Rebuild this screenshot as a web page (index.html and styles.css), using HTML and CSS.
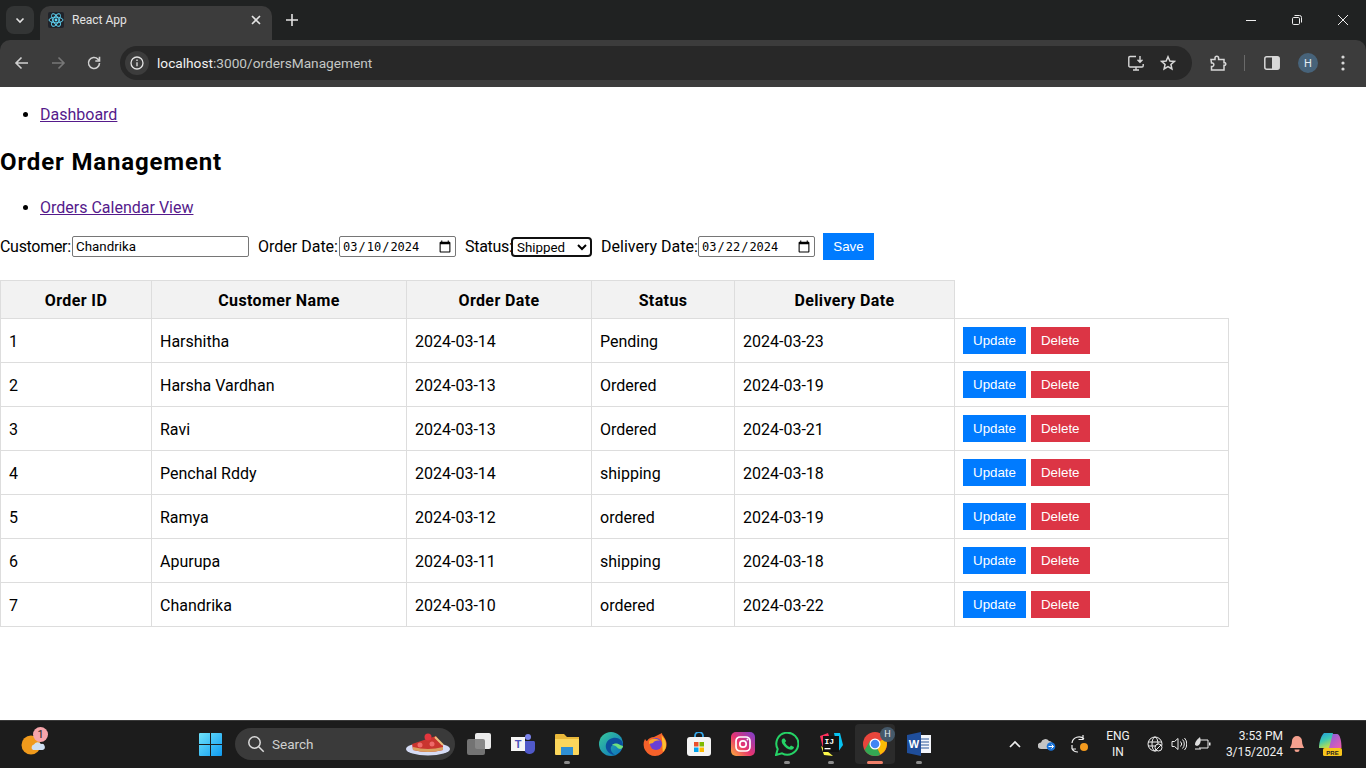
FILE: index.html
```html
<!DOCTYPE html>
<html>
<head>
    <title>React App</title>
    <link rel="stylesheet" href="styles.css">
</head>
<body>
    <div class="browser-top">
        <div class="tab-strip">
            <div class="tab-search">
                <svg width="12" height="12" viewBox="0 0 12 12"><path d="M2.5 4.5 6 8l3.5-3.5" fill="none" stroke="#e3e3e3" stroke-width="1.6"/></svg>
            </div>
            <div class="tab">
                <div class="favicon">
                    <svg width="16" height="16" viewBox="0 0 16 16" fill="none" stroke="#61dafb" stroke-width=".9">
                        <ellipse cx="8" cy="8" rx="7" ry="2.8"/>
                        <ellipse cx="8" cy="8" rx="7" ry="2.8" transform="rotate(60 8 8)"/>
                        <ellipse cx="8" cy="8" rx="7" ry="2.8" transform="rotate(120 8 8)"/>
                        <circle cx="8" cy="8" r="1.4" fill="#61dafb" stroke="none"/>
                    </svg>
                </div>
                <span class="tab-title">React App</span>
                <svg class="tab-close" width="10" height="10" viewBox="0 0 10 10"><path d="M1 1l8 8M9 1l-8 8" stroke="#e3e3e3" stroke-width="1.6"/></svg>
            </div>
            <svg class="new-tab" width="12" height="12" viewBox="0 0 12 12"><path d="M6 0v12M0 6h12" stroke="#e3e3e3" stroke-width="1.6"/></svg>
            <div class="window-controls">
                <div class="win-btn"><svg width="12" height="12" viewBox="0 0 12 12"><path d="M1 6.5h10" stroke="#eee" stroke-width="1"/></svg></div>
                <div class="win-btn"><svg width="12" height="12" viewBox="0 0 12 12" fill="none" stroke="#eee"><rect x="1.5" y="3.5" width="7" height="7" rx="1.2"/><path d="M3.5 1.5h5a2 2 0 0 1 2 2v5"/></svg></div>
                <div class="win-btn"><svg width="12" height="12" viewBox="0 0 12 12"><path d="M1 1l10 10M11 1 1 11" stroke="#eee" stroke-width="1"/></svg></div>
            </div>
        </div>
        <div class="toolbar">
            <div class="nav-btn"><svg width="16" height="16" viewBox="0 0 16 16" fill="none" stroke="#d0d0d0" stroke-width="1.6"><path d="M14 8H2M7.5 2.5 2 8l5.5 5.5"/></svg></div>
            <div class="nav-btn"><svg width="16" height="16" viewBox="0 0 16 16" fill="none" stroke="#777" stroke-width="1.6"><path d="M2 8h12M8.5 2.5 14 8l-5.500 5.500"/></svg></div>
            <div class="nav-btn"><svg width="16" height="16" viewBox="0 0 16 16" fill="none" stroke="#d0d0d0" stroke-width="1.6"><path d="M13.500 8a5.500 5.500 0 1 1-1.600-3.900L13.500 5.700"/><path d="M13.500 1.800v4.200H9.300" /></svg></div>
            <div class="address-bar">
                <div class="site-info"><svg width="14" height="14" viewBox="0 0 14 14" fill="none" stroke="#e3e3e3" stroke-width="1.300"><circle cx="7" cy="7" r="6"/><path d="M7 6.200v4M7 3.600v1.400"/></svg></div>
                <div class="url"><span class="url-host">localhost</span>:3000/ordersManagement</div>
                <svg class="addr-icon" width="18" height="18" viewBox="0 0 18 18" fill="none" stroke="#d8d8d8" stroke-width="1.400"><path d="M9 2.500H3a1.200 1.200 0 0 0-1.200 1.200v8A1.200 1.200 0 0 0 3 13h12a1.200 1.200 0 0 0 1.200-1.200V10M6 16h6M9 13v3M13 2v6M10.500 5.800 13 8.300l2.500-2.500"/></svg>
                <svg class="addr-icon star-icon" width="16" height="16" viewBox="0 0 18 18" fill="none" stroke="#d8d8d8" stroke-width="1.700"><path d="m9 2 2.100 4.700 5 .5-3.800 3.400 1.100 5L9 13l-4.400 2.600 1.100-5L1.900 7.200l5-.5z"/></svg>
            </div>
            <div class="tool-icons">
                <svg width="18" height="18" viewBox="0 0 18 18" fill="none" stroke="#d8d8d8" stroke-width="1.500"><path d="M2 5.500h4V4a1.800 1.800 0 0 1 3.600 0v1.500H15v3.300h1.200a1.500 1.500 0 0 1 0 2.400H15V16H2.500v-3.500H3.500a1.800 1.800 0 0 0 0-3.500H2.500z"/></svg>
                <div class="tool-sep"></div>
                <svg width="16" height="14" viewBox="0 0 16 14"><rect x=".8" y=".8" width="14.400" height="12.400" rx="2" fill="none" stroke="#d8d8d8" stroke-width="1.500"/><rect x="8" y="1" width="7" height="12" fill="#d8d8d8"/></svg>
                <div class="avatar">H</div>
                <svg width="4" height="16" viewBox="0 0 4 16" fill="#d8d8d8"><circle cx="2" cy="2" r="1.600"/><circle cx="2" cy="8" r="1.600"/><circle cx="2" cy="14" r="1.600"/></svg>
            </div>
        </div>
    </div>

    <div class="page">
        <ul class="link-list">
            <li><a href="#">Dashboard</a></li>
        </ul>
        <h2>Order Management</h2>
        <ul class="link-list">
            <li><a href="#">Orders Calendar View</a></li>
        </ul>

        <form class="order-form">
            <label for="customer" class="label-customer">Customer:</label>
            <input type="text" id="customer" class="customer-input" value="Chandrika">
            <label for="orderDate" class="label-order">Order Date:</label>
            <input type="date" id="orderDate" class="date-input" value="2024-03-10">
            <label for="status" class="label-status">Status:</label>
            <select id="status" class="status-select">
                <option>Shipped</option>
            </select>
            <label for="deliveryDate" class="label-delivery">Delivery Date:</label>
            <input type="date" id="deliveryDate" class="date-input" value="2024-03-22">
            <button type="button" class="btn btn-blue save-btn">Save</button>
        </form>

        <table class="orders-table">
            <colgroup>
                <col class="col-id">
                <col class="col-name">
                <col class="col-date">
                <col class="col-status">
                <col class="col-delivery">
                <col class="col-actions">
            </colgroup>
            <thead>
                <tr>
                    <th>Order ID</th>
                    <th>Customer Name</th>
                    <th>Order Date</th>
                    <th>Status</th>
                    <th>Delivery Date</th>
                </tr>
            </thead>
            <tbody>
                <tr>
                    <td>1</td><td>Harshitha</td><td>2024-03-14</td><td>Pending</td><td>2024-03-23</td>
                    <td><div class="actions"><button class="btn btn-blue">Update</button><button class="btn btn-red">Delete</button></div></td>
                </tr>
                <tr>
                    <td>2</td><td>Harsha Vardhan</td><td>2024-03-13</td><td>Ordered</td><td>2024-03-19</td>
                    <td><div class="actions"><button class="btn btn-blue">Update</button><button class="btn btn-red">Delete</button></div></td>
                </tr>
                <tr>
                    <td>3</td><td>Ravi</td><td>2024-03-13</td><td>Ordered</td><td>2024-03-21</td>
                    <td><div class="actions"><button class="btn btn-blue">Update</button><button class="btn btn-red">Delete</button></div></td>
                </tr>
                <tr>
                    <td>4</td><td>Penchal Rddy</td><td>2024-03-14</td><td>shipping</td><td>2024-03-18</td>
                    <td><div class="actions"><button class="btn btn-blue">Update</button><button class="btn btn-red">Delete</button></div></td>
                </tr>
                <tr>
                    <td>5</td><td>Ramya</td><td>2024-03-12</td><td>ordered</td><td>2024-03-19</td>
                    <td><div class="actions"><button class="btn btn-blue">Update</button><button class="btn btn-red">Delete</button></div></td>
                </tr>
                <tr>
                    <td>6</td><td>Apurupa</td><td>2024-03-11</td><td>shipping</td><td>2024-03-18</td>
                    <td><div class="actions"><button class="btn btn-blue">Update</button><button class="btn btn-red">Delete</button></div></td>
                </tr>
                <tr>
                    <td>7</td><td>Chandrika</td><td>2024-03-10</td><td>ordered</td><td>2024-03-22</td>
                    <td><div class="actions"><button class="btn btn-blue">Update</button><button class="btn btn-red">Delete</button></div></td>
                </tr>
            </tbody>
        </table>
    </div>

    <div class="taskbar">
        <div class="weather">
            <svg width="26" height="26" viewBox="0 0 26 26">
                <circle cx="11" cy="14" r="9.500" fill="#f09a1c"/>
                <path d="M13 19a3 3 0 0 1 1-5.500 4 4 0 0 1 7-.5 3 3 0 0 1 1.500 6z" fill="#cfe0f2"/>
            </svg>
            <span class="weather-badge">1</span>
        </div>

        <div class="start-btn">
            <svg width="23" height="23" viewBox="0 0 23 23">
                <defs>
                    <linearGradient id="winGrad" x1="0" y1="0" x2="1" y2="1"><stop offset="0" stop-color="#6fe3fb"/><stop offset="1" stop-color="#0f9af0"/></linearGradient>
                </defs>
                <path fill="url(#winGrad)" d="M0 1a1 1 0 0 1 1-1h10v11H0zM12 0h10a1 1 0 0 1 1 1v10H12zM0 12h11v11H1a1 1 0 0 1-1-1zM12 12h11v10a1 1 0 0 1-1 1H12z"/>
            </svg>
        </div>

        <div class="search-box">
            <svg width="18" height="18" viewBox="0 0 18 18" fill="none" stroke="#dcdcdc" stroke-width="1.500"><circle cx="7.500" cy="7.500" r="5.700"/><path d="m11.700 11.700 5 5"/></svg>
            <span class="search-text">Search</span>
            <svg class="search-pie" width="46" height="26" viewBox="0 0 46 26">
                <ellipse cx="23" cy="18" rx="22" ry="6.500" fill="#d5dcf5"/>
                <path d="M7 13 31 5l7 9v5q-15 4-30 0z" fill="#c9352f"/>
                <path d="M8 19q15 4 30 0v-3q-15 4-30 0z" fill="#d9a05f"/>
                <path d="M30 6l8 8" stroke="#e8c27f" stroke-width="2"/>
                <circle cx="23" cy="6" r="3.500" fill="#e3363d"/>
                <circle cx="15" cy="14" r="2.500" fill="#ef6a6a"/>
                <circle cx="27" cy="13" r="2.500" fill="#ef6a6a"/>
            </svg>
        </div>

        <div class="app-list">
            <div class="app-slot">
                <svg width="26" height="24" viewBox="0 0 26 24"><rect x="9" y="1" width="16" height="16" rx="2" fill="#eaeaea"/><rect x="1" y="7" width="18" height="16" rx="2" fill="#7d7d7d" opacity=".9"/></svg>
            </div>
            <div class="app-slot">
                <svg width="26" height="24" viewBox="0 0 26 24">
                    <circle cx="18" cy="5" r="3" fill="#7b83eb"/>
                    <path d="M14 9h10a2 2 0 0 1 1 2v6a5 5 0 0 1-5 5h-1a6 6 0 0 1-5-5z" fill="#5059c9"/>
                    <rect x="1" y="5" width="14" height="14" fill="#f5f5f5"/>
                    <text x="8" y="16" class="teams-letter">T</text>
                </svg>
            </div>
            <div class="app-slot running">
                <svg width="26" height="24" viewBox="0 0 26 24">
                    <path d="M1 3a1 1 0 0 1 1-1h8l3 3h12v3H1z" fill="#e9b83a"/>
                    <path d="M1 7h24v15a1 1 0 0 1-1 1H2a1 1 0 0 1-1-1z" fill="#fbd65c"/>
                    <rect x="7" y="15" width="12" height="8" fill="#2f8fd3"/>
                </svg>
            </div>
            <div class="app-slot">
                <svg width="24" height="24" viewBox="0 0 24 24">
                    <defs>
                        <linearGradient id="edgeGrad" x1="0" y1="0" x2="1" y2="1"><stop offset="0" stop-color="#38c99a"/><stop offset="1" stop-color="#0a6fc2"/></linearGradient>
                    </defs>
                    <circle cx="12" cy="12" r="12" fill="url(#edgeGrad)"/>
                    <path d="M24 13c0-5-5-8-10-7-5 1-8 5-7 10 1 4 5 7 9 7 -3-2-5-5-4-8 1-2 3-3 5-2 3 1 1 4 4 4 2 0 3-2 3-4z" fill="#0c4f9e"/>
                    <path d="M13 13c2-2 6-2 8 0l3 1c0 1-1 3-3 3-3 0-3-4-8-4z" fill="#6fe07f"/>
                </svg>
            </div>
            <div class="app-slot">
                <svg width="24" height="24" viewBox="0 0 24 24">
                    <path d="M12 24A11.500 11.500 0 0 1 2 7c1 1 1 2 2 2 2-3 4-4 7-4l8-4c0 2 1 2 2 4 3 4 3 8 2 11a11.500 11.500 0 0 1-11 8z" fill="#f5612a"/>
                    <path d="M18 1c0 3 2 3 4 7 2 5 1 9-2 12-1-4 0-10-2-19z" fill="#fdc02f"/>
                    <circle cx="13" cy="12" r="6" fill="#6b3fd4"/>
                    <path d="M6 9c3-3 8-3 11 0-3-1-6 0-7 2l-4 1z" fill="#f8a62d"/>
                </svg>
            </div>
            <div class="app-slot">
                <svg width="24" height="24" viewBox="0 0 24 24">
                    <path d="M8 6V4a4 4 0 0 1 8 0v2" fill="none" stroke="#35a6e8" stroke-width="1.800"/>
                    <rect y="5" width="24" height="19" rx="3" fill="#f4f4f4"/>
                    <rect x="7" y="10" width="4.500" height="4.500" fill="#ea4f2b"/>
                    <rect x="12.500" y="10" width="4.500" height="4.500" fill="#7fb900"/>
                    <rect x="7" y="15.500" width="4.500" height="4.500" fill="#00a3ee"/>
                    <rect x="12.500" y="15.500" width="4.500" height="4.500" fill="#fdb900"/>
                </svg>
            </div>
            <div class="app-slot">
                <svg width="24" height="24" viewBox="0 0 24 24">
                    <defs>
                        <linearGradient id="instaGrad" x1="0" y1="1" x2="1" y2="0"><stop offset="0" stop-color="#fdb13a"/><stop offset=".45" stop-color="#e8346f"/><stop offset="1" stop-color="#7a3fd0"/></linearGradient>
                    </defs>
                    <rect width="24" height="24" rx="5" fill="url(#instaGrad)"/>
                    <rect x="5" y="5" width="14" height="14" rx="4" fill="none" stroke="#fff" stroke-width="1.700"/>
                    <circle cx="12" cy="12" r="3.200" fill="none" stroke="#fff" stroke-width="1.700"/>
                    <circle cx="16.500" cy="7.500" r="1" fill="#fff"/>
                </svg>
            </div>
            <div class="app-slot running">
                <svg width="24" height="24" viewBox="0 0 24 24">
                    <path d="M1 23l1.700-6A11 11 0 1 1 7 21.300z" fill="none" stroke="#25d366" stroke-width="2"/>
                    <path d="M8 6.500c-1.500 1-2 3 0 6s5 5 8 5.200c2 0 3-1.500 3-2.700l-3-1.500-1.500 1.500c-2-.8-3.500-2.300-4.500-4.500l1.200-1.500L9.500 6.500z" fill="#25d366"/>
                </svg>
            </div>
            <div class="app-slot running">
                <svg width="24" height="24" viewBox="0 0 24 24">
                    <path d="M1 4 9 1l2 6-7 9z" fill="#fe315d"/>
                    <path d="M15 1h6l3 12-5 7z" fill="#07c3f2"/>
                    <path d="M2 14l3 9 9 1z" fill="#fcf84a"/>
                    <rect x="4" y="4" width="16" height="16" fill="#111"/>
                    <text x="5.500" y="12" class="ij-letters">IJ</text>
                    <rect x="5.500" y="16" width="6" height="1.300" fill="#fff"/>
                </svg>
            </div>
            <div class="app-slot active">
                <svg width="24" height="24" viewBox="0 0 24 24">
                    <circle cx="12" cy="12" r="12" fill="#e8453c"/>
                    <path d="M12 12 22.400 6a12 12 0 0 1-5 16.400z" fill="#fbbc05"/>
                    <path d="M12 12 17.400 22.700A12 12 0 0 1 1.600 18L7 9z" fill="#34a853"/>
                    <circle cx="12" cy="12" r="5.500" fill="#fff"/>
                    <circle cx="12" cy="12" r="4.300" fill="#4285f4"/>
                </svg>
                <span class="profile-badge">H</span>
            </div>
            <div class="app-slot running">
                <svg width="24" height="24" viewBox="0 0 24 24">
                    <rect x="6" y="3" width="18" height="18" fill="#f4f6fb"/>
                    <path d="M14 7h8M14 10h8M14 13h8M14 16h8" stroke="#2b579a" stroke-width="1.200"/>
                    <path d="M0 3l14-3v24L0 21z" fill="#1f4e9b"/>
                    <text x="7" y="16" class="word-letter">W</text>
                </svg>
            </div>
        </div>

        <div class="tray">
            <svg class="tray-chevron" width="12" height="8" viewBox="0 0 12 8"><path d="M1 7l5-5 5 5" fill="none" stroke="#eee" stroke-width="1.700"/></svg>
            <svg class="tray-cloud" width="18" height="14" viewBox="0 0 18 14">
                <path d="M3 12a3 3 0 0 1 0-6.500 4.500 4.500 0 0 1 8-1.500 3 3 0 0 1 3 3v5z" fill="#c4c4c4"/>
                <circle cx="13" cy="9.500" r="4.300" fill="#1a73d8"/>
                <path d="M10.500 9.500h5M13.500 7.500l2 2-2 2" fill="none" stroke="#fff"/>
            </svg>
            <svg class="tray-sync" width="20" height="20" viewBox="0 0 20 20">
                <path d="M2 9a7 7 0 0 1 12-4M13 1v4.500H8.500M2 15v-4M2 15h4M2 15a7 7 0 0 0 6 3" fill="none" stroke="#eee" stroke-width="1.200"/>
                <circle cx="14" cy="13" r="4" fill="#f39a1e"/>
            </svg>
            <div class="lang">ENG<br>IN</div>
            <svg class="tray-net" width="16" height="16" viewBox="0 0 16 16" fill="none" stroke="#eee" stroke-width="1"><circle cx="8" cy="8" r="7"/><ellipse cx="8" cy="8" rx="3" ry="7"/><path d="M1 6h14M1 10h14"/><circle cx="11.500" cy="11.500" r="3.500" fill="#1c1c1c"/><path d="m9 14 5-5"/></svg>
            <svg class="tray-vol" width="16" height="16" viewBox="0 0 16 16" fill="none" stroke="#eee" stroke-width="1"><path d="M1 5.500h2.500L7 2.500v11l-3.500-3H1z"/><path d="M9.500 5.500a3.500 3.500 0 0 1 0 5M11.500 3.500a6.500 6.500 0 0 1 0 9M13.500 2a9 9 0 0 1 0 12"/></svg>
            <svg class="tray-batt" width="17" height="16" viewBox="0 0 17 16"><path d="M5 4h9v8H5" fill="none" stroke="#eee"/><path d="M15 6.500h1.500v3H15" fill="#eee"/><path d="M1 9c0-4 3-6 5-8 1 3 1 6-1 8l-2 1z" fill="#ddd"/><path d="M1 13h6" stroke="#eee"/></svg>
            <div class="clock"><div>3:53 PM</div><div>3/15/2024</div></div>
            <svg class="tray-bell" width="16" height="18" viewBox="0 0 16 18"><path d="M8 1a5 5 0 0 1 5 5c0 4 2 6 2 7H1c0-1 2-3 2-7a5 5 0 0 1 5-5z" fill="#f4a08e"/><path d="M5.500 14.500h5a2.500 2.500 0 0 1-5 0z" fill="#f4a08e"/></svg>
            <svg class="tray-copilot" width="24" height="24" viewBox="0 0 24 24">
                <defs>
                    <linearGradient id="copGrad" x1="0" y1="0" x2=".4" y2="1"><stop offset="0" stop-color="#1f9be0"/><stop offset=".55" stop-color="#3fc9b0"/><stop offset="1" stop-color="#b8dc50"/></linearGradient>
                    <linearGradient id="copGradR" x1="0" y1="0" x2="1" y2="1"><stop offset="0" stop-color="#7a5fe0"/><stop offset="1" stop-color="#f05cb0"/></linearGradient>
                </defs>
                <path d="M14 2h5c3 0 4.500 7 4.500 14H9z" fill="url(#copGradR)"/>
                <path d="M6 1h9l-4 15H1C1 10 3 4 6 1z" fill="url(#copGrad)"/>
                <rect x="5" y="16" width="19" height="8" rx="1.500" fill="#f8c51c"/>
                <text x="14.500" y="22.500" class="pre-letters">PRE</text>
            </svg>
        </div>
    </div>
</body>
</html>
```

FILE: styles.css
```css
* {
    box-sizing: border-box;
}

html, body {
    height: 100%;
}

body {
    margin: 0;
    display: flex;
    flex-direction: column;
    height: 768px;
    overflow: hidden;
    background-color: #ffffff;
    font-family: Roboto, "Noto Sans", sans-serif;
    font-size: 16px;
    color: #000000;
}

/* browser chrome */
.browser-top {
    flex: none;
    height: 87px;
    background-color: #202222;
}

.tab-strip {
    display: flex;
    align-items: flex-end;
    height: 40px;
}

.tab-search {
    display: flex;
    align-items: center;
    justify-content: center;
    width: 28px;
    height: 28px;
    margin: 0 6px 6px 6px;
    background-color: #333535;
    border-radius: 8px;
}

.tab {
    display: flex;
    align-items: center;
    width: 232px;
    height: 34px;
    padding: 0 11px 6px 8px;
    background-color: #3c3c3c;
    border-radius: 10px 10px 0 0;
}

.favicon {
    display: flex;
    flex: none;
    background-color: #20232a;
    border-radius: 2px;
}

.tab-title {
    flex: 1;
    margin-left: 8px;
    font-size: 12px;
    color: #e3e3e3;
}

.new-tab {
    margin: 0 0 14px 14px;
}

.window-controls {
    display: flex;
    margin-left: auto;
    height: 40px;
}

.win-btn {
    display: flex;
    align-items: center;
    justify-content: center;
    width: 46px;
    height: 40px;
}

.toolbar {
    display: flex;
    align-items: center;
    height: 47px;
    padding: 0 0 1px 4px;
    background-color: #3c3c3c;
    border-radius: 10px 10px 0 0;
}

.nav-btn {
    display: flex;
    align-items: center;
    justify-content: center;
    width: 36px;
    height: 34px;
}

.address-bar {
    display: flex;
    align-items: center;
    width: 1072px;
    height: 34px;
    margin-left: 8px;
    padding: 0 16px 0 5px;
    background-color: #282828;
    border-radius: 17px;
}

.site-info {
    display: flex;
    align-items: center;
    justify-content: center;
    width: 24px;
    height: 24px;
    background-color: #3c3c3c;
    border-radius: 50%;
}

.url {
    flex: 1;
    margin-left: 8px;
    font-size: 13.7px;
    color: #c4c7c5;
}

.url-host {
    color: #f1f1f1;
}

.addr-icon {
    margin-left: 14px;
}

.star-icon {
    margin-left: 15px;
}

.tool-icons {
    display: flex;
    align-items: center;
    margin-left: 17px;
}

.tool-sep {
    width: 1px;
    height: 16px;
    margin: 0 19px 0 17px;
    background-color: #6a6a6a;
}

.avatar {
    display: flex;
    align-items: center;
    justify-content: center;
    width: 20px;
    height: 20px;
    margin: 0 23px 0 18px;
    background-color: #47637a;
    border-radius: 50%;
    font-size: 11px;
    color: #e6edf2;
}

/* page */
.page {
    flex: 1;
    overflow: hidden;
}

.page a {
    color: #551a8b;
}

.link-list {
    margin: 17px 0 15px;
    padding-left: 40px;
    line-height: 21px;
}

h2 {
    margin: 21px 0 19px;
    font-size: 24px;
    line-height: 32px;
    letter-spacing: .85px;
}

.order-form {
    display: flex;
    align-items: center;
    margin-bottom: 20px;
    line-height: 22px;
}

.order-form label {
    white-space: nowrap;
}

.label-customer { width: 72px; letter-spacing: -.3px; }
.label-order { width: 81px; margin-left: 9px; }
.label-status { width: 46px; margin-left: 9px; letter-spacing: -.3px; }
.label-delivery { width: 97px; margin-left: 9px; }

.customer-input {
    width: 177px;
    height: 21px;
    padding: 1px 3px;
    font-family: Roboto, sans-serif;
    font-size: 13.33px;
    border: 1px solid #767676;
    border-radius: 2px;
}

.date-input {
    width: 117px;
    height: 21px;
    padding: 1px 3px 1px 2px;
    font-family: "DejaVu Sans Mono", monospace;
    font-size: 12px;
    border: 1px solid #767676;
    border-radius: 2px;
}

.date-input::-webkit-calendar-picker-indicator {
    width: 14px;
    height: 14px;
    margin: 0;
    padding: 0;
}

.status-select {
    width: 81px;
    height: 20px;
    padding: 0 0 1px;
    font-family: Roboto, sans-serif;
    font-size: 13.33px;
    background-color: #ffffff;
    border: 2px solid #101010;
    border-radius: 4px;
}

.btn {
    height: 27px;
    padding: 6px 10px;
    font-family: "Liberation Sans", Arial, sans-serif;
    font-size: 13.33px;
    line-height: 15px;
    color: #ffffff;
    border: none;
}

.btn-blue {
    background-color: #007bff;
}

.btn-red {
    background-color: #dc3545;
}

.save-btn {
    width: 51px;
    margin-left: 8px;
}

/* table */
.orders-table {
    width: 1228px;
    table-layout: fixed;
    border-collapse: collapse;
}

.col-id { width: 151px; }
.col-name { width: 255px; }
.col-date { width: 185px; }
.col-status { width: 143px; }
.col-delivery { width: 220px; }
.col-actions { width: 274px; }

.orders-table th,
.orders-table td {
    padding: 9px 8px 7px;
    border: 1px solid #dddddd;
    text-align: left;
    line-height: 21px;
}

.orders-table th {
    height: 38px;
    text-align: center;
    letter-spacing: .38px;
    background-color: #f2f2f2;
}

.orders-table td {
    height: 44px;
}

.orders-table td:last-child {
    padding: 8px;
}

.actions {
    display: flex;
    gap: 5px;
}

/* windows taskbar */
.taskbar {
    flex: none;
    display: flex;
    align-items: center;
    height: 48px;
    padding-bottom: 1px;
    background-color: #1c1c1c;
    border-top: 1px solid #3a3a3a;
}

.weather {
    position: relative;
    display: flex;
    width: 26px;
    margin-left: 20px;
}

.weather-badge {
    position: absolute;
    top: -4px;
    right: -2px;
    width: 15px;
    height: 15px;
    background-color: #f7a5ab;
    border-radius: 50%;
    font-size: 11px;
    line-height: 15px;
    text-align: center;
    color: #1c1c1c;
}

.start-btn {
    display: flex;
    justify-content: center;
    width: 44px;
    margin-left: 142px;
    margin-right: 3px;
}

.search-box {
    display: flex;
    align-items: center;
    width: 220px;
    height: 32px;
    padding: 0 4px 0 12px;
    background-color: #3a3a3a;
    border-radius: 16px;
}

.search-text {
    flex: 1;
    margin-left: 7px;
    font-size: 13.5px;
    color: #d0d0d0;
}

.app-list {
    display: flex;
    margin-left: 2px;
}

.app-slot {
    position: relative;
    display: flex;
    align-items: center;
    justify-content: center;
    width: 44px;
    height: 40px;
}

.app-slot.running::after,
.app-slot.active::after {
    content: "";
    position: absolute;
    bottom: 0;
    left: 19px;
    width: 6px;
    height: 3px;
    background-color: #8c8c8c;
    border-radius: 2px;
}

.app-slot.active {
    width: 40px;
    margin: 0 2px;
    background-color: #2b2b2b;
    border-radius: 4px;
}

.app-slot.active::after {
    left: 12px;
    width: 16px;
    background-color: #f0806a;
}

.profile-badge {
    position: absolute;
    top: 3px;
    right: 0;
    width: 15px;
    height: 15px;
    background-color: #45596a;
    border-radius: 50%;
    font-size: 9px;
    line-height: 15px;
    text-align: center;
    color: #e8eef2;
}

.teams-letter {
    font-family: "Liberation Sans", sans-serif;
    font-size: 11px;
    font-weight: bold;
    text-anchor: middle;
    fill: #4b53bc;
}

.ij-letters {
    font-family: "Liberation Mono", monospace;
    font-size: 8px;
    font-weight: bold;
    fill: #ffffff;
}

.word-letter {
    font-family: "Liberation Sans", sans-serif;
    font-size: 11px;
    font-weight: bold;
    text-anchor: middle;
    fill: #ffffff;
}

.pre-letters {
    font-family: "Liberation Sans", sans-serif;
    font-size: 6px;
    font-weight: bold;
    text-anchor: middle;
    fill: #1c1c1c;
}

.tray {
    display: flex;
    align-items: center;
    margin-left: 68px;
    font-size: 12px;
    color: #f0f0f0;
}

.tray-cloud { margin-left: 17px; }
.tray-sync { margin-left: 14px; }

.lang {
    width: 36px;
    margin-left: 10px;
    text-align: center;
    line-height: 16px;
}

.tray-net { margin-left: 11px; }
.tray-vol { margin-left: 8px; }
.tray-batt { margin-left: 7px; }

.clock {
    width: 60px;
    margin-left: 12px;
    text-align: right;
    line-height: 16px;
}

.tray-bell { margin-left: 6px; }
.tray-copilot { margin-left: 13px; }
```
